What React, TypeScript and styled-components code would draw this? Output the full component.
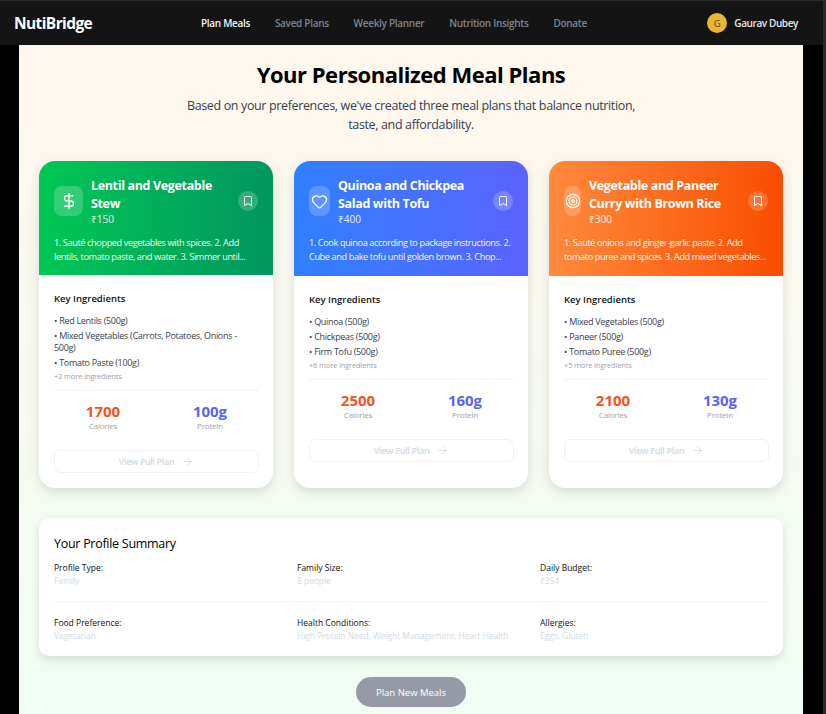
import React from "react";
import styled, { createGlobalStyle } from "styled-components";
import { DollarSign, Heart, Target, Bookmark, ArrowRight } from "lucide-react";

const Global = createGlobalStyle`
  html, body { margin: 0; padding: 0; background: #000; }
  body { font-family: "Open Sans", "Noto Sans", sans-serif; height: 714px; overflow: hidden; }
  * { box-sizing: border-box; }
`;

const Outer = styled.div`
  background: #2a2a2a;
  width: 826px;
  height: 714px;
  padding: 1px 3px 0 0;
`;
const Frame = styled.div`
  width: 823px;
  height: 713px;
  overflow: hidden;
  background: #000;
`;
const Header = styled.header`
  height: 44px;
  background: #141414;
  display: flex;
  align-items: center;
  padding: 0 25px 0 14px;
`;
const Logo = styled.div`
  font-size: 15.5px;
  font-weight: 700;
  letter-spacing: -0.6px;
  color: #fff;
  width: 187px;
`;
const Nav = styled.nav`
  display: flex;
  gap: 24.8px;
  flex: 1;
`;
const NavLink = styled.a<{ $active?: boolean }>`
  font-size: 10px;
  font-weight: 600;
  letter-spacing: -0.3px;
  color: ${(p) => (p.$active ? "#f3f4f6" : "#7d8491")};
`;
const User = styled.div`
  display: flex;
  align-items: center;
  gap: 7px;
`;
const Avatar = styled.div`
  width: 20px;
  height: 20px;
  border-radius: 50%;
  background: #e8b535;
  color: #5f4510;
  font-size: 9.5px;
  display: flex;
  align-items: center;
  justify-content: center;
`;
const UserName = styled.div`
  font-size: 10px;
  font-weight: 600;
  letter-spacing: -0.4px;
  color: #e5e7eb;
`;
const Main = styled.main`
  width: 784px;
  margin-left: 19px;
  height: 669px;
  background: linear-gradient(180deg, #fff7ed 0%, #f0fdf4 100%);
  padding: 14px 20px 0;
`;
const Title = styled.h1`
  margin: 0;
  text-align: center;
  font-size: 22px;
  line-height: 30px;
  font-weight: 700;
  letter-spacing: -0.48px;
  color: #000;
`;
const Sub = styled.p`
  margin: 7px auto 0;
  width: 470px;
  text-align: center;
  font-size: 12.5px;
  line-height: 19px;
  letter-spacing: -0.36px;
  color: #374151;
`;
const Cards = styled.div`
  margin-top: 27px;
  display: grid;
  grid-template-columns: repeat(3, 234px);
  column-gap: 21px;
  align-items: stretch;
`;
const Card = styled.article`
  height: 327px;
  border-radius: 16px;
  background: #fff;
  overflow: hidden;
  box-shadow: 0 4px 12px rgba(0, 0, 0, 0.12);
  display: flex;
  flex-direction: column;
`;
const CardTop = styled.div<{ $from: string; $to: string }>`
  height: 115px;
  padding: 15px 15px 0;
  color: #fff;
  background: linear-gradient(90deg, ${(p) => p.$from}, ${(p) => p.$to});
`;
const TopRow = styled.div`
  display: flex;
  align-items: center;
  gap: 8px;
`;
const IconBox = styled.div<{ $w: number }>`
  width: ${(p) => p.$w}px;
  height: 30px;
  flex-shrink: 0;
  border-radius: 8px;
  background: rgba(255, 255, 255, 0.2);
  display: flex;
  align-items: center;
  justify-content: center;
`;
const TitleBlock = styled.div`
  flex: 1;
  min-width: 0;
`;
const CardTitle = styled.h3`
  margin: 1px 0 0;
  font-size: 12.5px;
  line-height: 18px;
  font-weight: 700;
  letter-spacing: -0.35px;
  color: #fff;
`;
const Price = styled.div`
  font-size: 10px;
  line-height: 13px;
  opacity: 0.9;
`;
const Save = styled.div`
  width: 20px;
  height: 20px;
  flex-shrink: 0;
  border-radius: 50%;
  background: rgba(255, 255, 255, 0.2);
  display: flex;
  align-items: center;
  justify-content: center;
`;
const Steps = styled.p`
  margin: 10px 0 0;
  font-size: 9.2px;
  line-height: 13.5px;
  letter-spacing: -0.4px;
  opacity: 0.95;
`;
const CardBody = styled.div`
  flex: 1;
  padding: 17px 14px 15px 15px;
  display: flex;
  flex-direction: column;
`;
const KeyHead = styled.h4`
  margin: 0 0 9px;
  font-size: 9.5px;
  line-height: 14px;
  font-weight: 600;
  color: #111;
`;
const Ingredient = styled.div`
  font-size: 9px;
  line-height: 12px;
  letter-spacing: -0.3px;
  color: #374151;
  margin-bottom: 3px;
`;
const More = styled.div`
  font-size: 7.5px;
  line-height: 9px;
  letter-spacing: -0.15px;
  color: #9ca3af;
`;
const Stats = styled.div`
  margin-top: 9px;
  border-top: 1px solid #f3f4f6;
  padding-top: 10px;
  display: grid;
  grid-template-columns: 1fr 1fr;
  column-gap: 9px;
  text-align: center;
`;
const StatValue = styled.div<{ $c: string }>`
  font-size: 15px;
  line-height: 20px;
  font-weight: 700;
  color: ${(p) => p.$c};
`;
const StatLabel = styled.div`
  font-size: 8px;
  line-height: 9px;
  letter-spacing: -0.2px;
  color: #9ca3af;
`;
const ViewBtn = styled.button`
  margin-top: 20px;
  width: 100%;
  height: 23px;
  border: 1px solid #eef0f4;
  border-radius: 6px;
  background: #fff;
  color: #d1dbe3;
  font-family: inherit;
  font-size: 9px;
  font-weight: 600;
  letter-spacing: -0.3px;
  display: flex;
  align-items: center;
  justify-content: center;
  gap: 7px;
  padding: 0;
`;
const Summary = styled.section`
  margin-top: 30px;
  height: 138px;
  background: #fff;
  border-radius: 10px;
  box-shadow: 0 4px 10px rgba(0, 0, 0, 0.12);
  padding: 16px 15px 15px;
`;
const SumTitle = styled.h2`
  margin: 0 0 8px;
  font-size: 12.5px;
  line-height: 20px;
  font-weight: 500;
  letter-spacing: -0.28px;
  color: #000;
`;
const SumGrid = styled.div`
  display: grid;
  grid-template-columns: 243px 243px 1fr;
`;
const SumCell = styled.div`
  height: 28px;
`;
const Divider = styled.div`
  grid-column: 1 / -1;
  height: 1px;
  background: #f5f5f5;
  margin: 11px 0 15px;
`;
const SumLabel = styled.div`
  font-size: 8.5px;
  line-height: 12px;
  color: #111;
`;
const SumValue = styled.div`
  font-size: 8.5px;
  line-height: 13px;
  letter-spacing: -0.06px;
  color: #d1dbe3;
`;
const Bottom = styled.div`
  margin-top: 21px;
  display: flex;
  justify-content: center;
`;
const PlanBtn = styled.button`
  width: 110px;
  height: 30px;
  border: 0;
  border-radius: 15px;
  background: #9699a6;
  color: #fff;
  font-family: inherit;
  font-size: 9.5px;
`;

const plans = [
  {
    from: "#00c853", to: "#009660", w: 29, Icon: DollarSign, iconSize: 18,
    title: "Lentil and Vegetable Stew", price: "₹150",
    steps: "1. Sauté chopped vegetables with spices. 2. Add lentils, tomato paste, and water. 3. Simmer until...",
    ing: ["Red Lentils (500g)", "Mixed Vegetables (Carrots, Potatoes, Onions - 500g)", "Tomato Paste (100g)"],
    more: "+2 more ingredients", cal: "1700", pro: "100g",
  },
  {
    from: "#2f80ff", to: "#5b63ff", w: 21, Icon: Heart, iconSize: 17,
    title: "Quinoa and Chickpea Salad with Tofu", price: "₹400",
    steps: "1. Cook quinoa according to package instructions. 2. Cube and bake tofu until golden brown. 3. Chop...",
    ing: ["Quinoa (500g)", "Chickpeas (500g)", "Firm Tofu (500g)"],
    more: "+6 more ingredients", cal: "2500", pro: "160g",
  },
  {
    from: "#ff8a3d", to: "#f94d00", w: 17, Icon: Target, iconSize: 16,
    title: "Vegetable and Paneer Curry with Brown Rice", price: "₹300",
    steps: "1. Sauté onions and ginger-garlic paste. 2. Add tomato puree and spices. 3. Add mixed vegetables...",
    ing: ["Mixed Vegetables (500g)", "Paneer (500g)", "Tomato Puree (500g)"],
    more: "+5 more ingredients", cal: "2100", pro: "130g",
  },
];

const summary = [
  ["Profile Type:", "Family"],
  ["Family Size:", "8 people"],
  ["Daily Budget:", "₹354"],
  ["Food Preference:", "Vegetarian"],
  ["Health Conditions:", "High Protein Need, Weight Management, Heart Health"],
  ["Allergies:", "Eggs, Gluten"],
];

export default function App() {
  return (
    <Outer>
      <Global />
      <Frame>
        <Header>
          <Logo>NutiBridge</Logo>
          <Nav>
            <NavLink $active>Plan Meals</NavLink>
            <NavLink>Saved Plans</NavLink>
            <NavLink>Weekly Planner</NavLink>
            <NavLink>Nutrition Insights</NavLink>
            <NavLink>Donate</NavLink>
          </Nav>
          <User>
            <Avatar>G</Avatar>
            <UserName>Gaurav Dubey</UserName>
          </User>
        </Header>
        <Main>
          <Title>Your Personalized Meal Plans</Title>
          <Sub>Based on your preferences, we've created three meal plans that balance nutrition, taste, and affordability.</Sub>
          <Cards>
            {plans.map((p) => (
              <Card key={p.title}>
                <CardTop $from={p.from} $to={p.to}>
                  <TopRow>
                    <IconBox $w={p.w}><p.Icon size={p.iconSize} strokeWidth={1.75} /></IconBox>
                    <TitleBlock>
                      <CardTitle>{p.title}</CardTitle>
                      <Price>{p.price}</Price>
                    </TitleBlock>
                    <Save><Bookmark size={12} /></Save>
                  </TopRow>
                  <Steps>{p.steps}</Steps>
                </CardTop>
                <CardBody>
                  <KeyHead>Key Ingredients</KeyHead>
                  {p.ing.map((i) => <Ingredient key={i}>• {i}</Ingredient>)}
                  <More>{p.more}</More>
                  <Stats>
                    <div><StatValue $c="#f4511e">{p.cal}</StatValue><StatLabel>Calories</StatLabel></div>
                    <div><StatValue $c="#5b63f5">{p.pro}</StatValue><StatLabel>Protein</StatLabel></div>
                  </Stats>
                  <ViewBtn>View Full Plan <ArrowRight size={13} strokeWidth={1.5} /></ViewBtn>
                </CardBody>
              </Card>
            ))}
          </Cards>
          <Summary>
            <SumTitle>Your Profile Summary</SumTitle>
            <SumGrid>
              {summary.slice(0, 3).map(([l, v]) => (
                <SumCell key={l}><SumLabel>{l}</SumLabel><SumValue>{v}</SumValue></SumCell>
              ))}
              <Divider />
              {summary.slice(3).map(([l, v]) => (
                <SumCell key={l}><SumLabel>{l}</SumLabel><SumValue>{v}</SumValue></SumCell>
              ))}
            </SumGrid>
          </Summary>
          <Bottom><PlanBtn>Plan New Meals</PlanBtn></Bottom>
        </Main>
      </Frame>
    </Outer>
  );
}
